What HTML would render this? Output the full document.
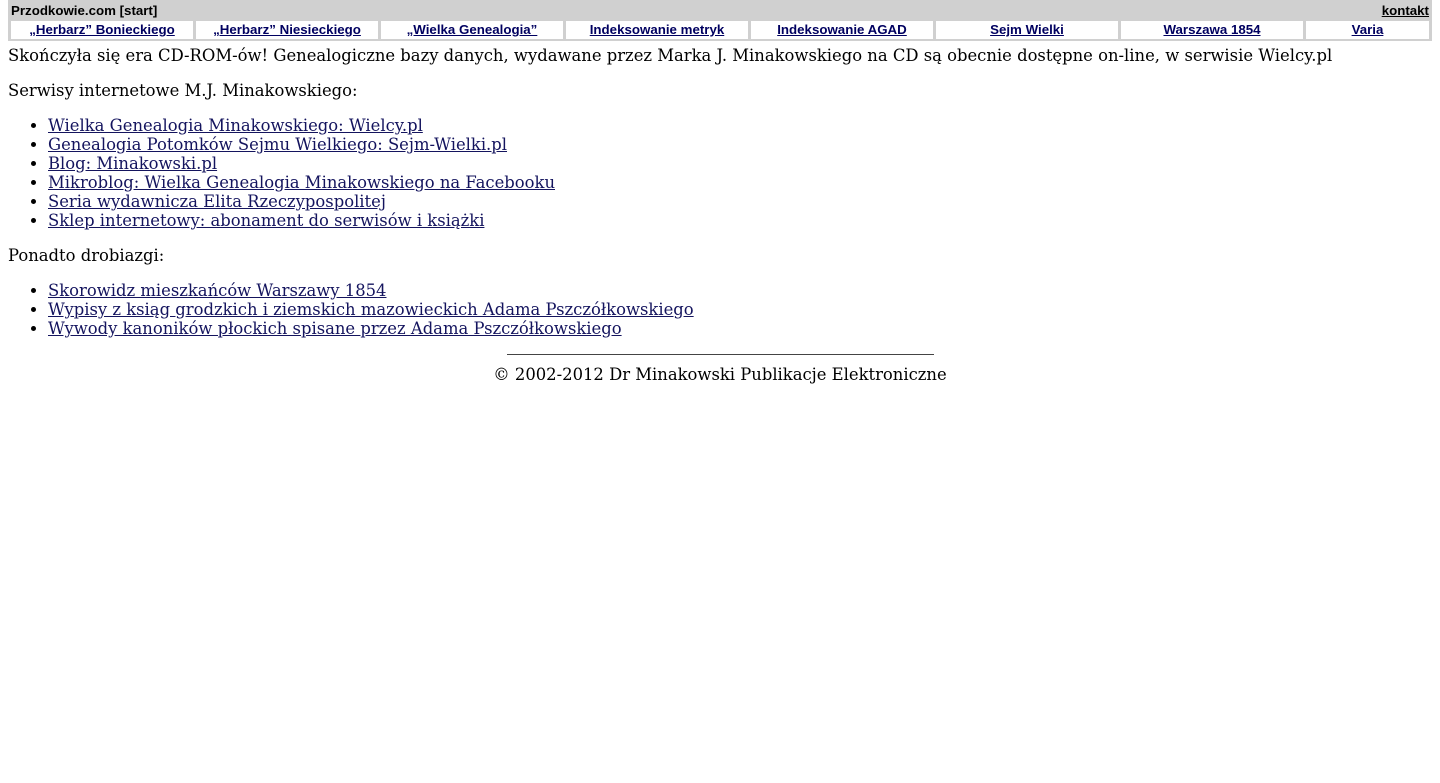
<!DOCTYPE html>
<html><head><meta charset="utf-8"><style>
body{margin:0 8px;background:#fff;color:#000;font-family:"DejaVu Serif","Liberation Serif",serif;font-size:16.4px;line-height:19px;font-weight:300}
a{color:#14145e}
.bar{background:#d0d0d0;font-family:"Liberation Sans",Arial,sans-serif;font-weight:bold;font-size:13.3px;line-height:14px;padding:0 3px 2px 3px;width:1418px}
.top{height:20px;display:flex;justify-content:space-between;align-items:center;padding-top:1px}
.top a{color:#000}
.cells{display:flex;gap:3px;height:18px}
.cells div{background:#fff;text-align:center;line-height:18px;flex:0 0 182px}
.cells div:last-child{flex:1 1 auto}
.cells a{color:#000060}
p{margin:4px 0 16px}
ul{margin:0 0 16px;padding-left:40px}
hr{width:427px;margin:0 auto;border:0;border-top:1px solid #444}
.foot{text-align:center;margin-top:10px}
</style></head><body>
<div class="bar"><div class="top"><span>Przodkowie.com [start]</span><a href="#">kontakt</a></div>
<div class="cells"><div><a href="#">„Herbarz” Bonieckiego</a></div><div><a href="#">„Herbarz” Niesieckiego</a></div><div><a href="#">„Wielka Genealogia”</a></div><div><a href="#">Indeksowanie metryk</a></div><div><a href="#">Indeksowanie AGAD</a></div><div><a href="#">Sejm Wielki</a></div><div><a href="#">Warszawa 1854</a></div><div><a href="#">Varia</a></div></div></div>
<p style="margin-top:5px">Skończyła się era CD-ROM-ów! Genealogiczne bazy danych, wydawane przez Marka J. Minakowskiego na CD są obecnie dostępne on-line, w serwisie Wielcy.pl</p>
<p>Serwisy internetowe M.J. Minakowskiego:</p>
<ul><li><a href="#">Wielka Genealogia Minakowskiego: Wielcy.pl</a></li><li><a href="#">Genealogia Potomków Sejmu Wielkiego: Sejm-Wielki.pl</a></li><li><a href="#">Blog: Minakowski.pl</a></li><li><a href="#">Mikroblog: Wielka Genealogia Minakowskiego na Facebooku</a></li><li><a href="#">Seria wydawnicza Elita Rzeczypospolitej</a></li><li><a href="#">Sklep internetowy: abonament do serwisów i książki</a></li></ul>
<p>Ponadto drobiazgi:</p>
<ul style="margin-bottom:16px"><li><a href="#">Skorowidz mieszkańców Warszawy 1854</a></li><li><a href="#">Wypisy z ksiąg grodzkich i ziemskich mazowieckich Adama Pszczółkowskiego</a></li><li><a href="#">Wywody kanoników płockich spisane przez Adama Pszczółkowskiego</a></li></ul>
<hr><div class="foot">© 2002-2012 Dr Minakowski Publikacje Elektroniczne</div>
</body></html>
